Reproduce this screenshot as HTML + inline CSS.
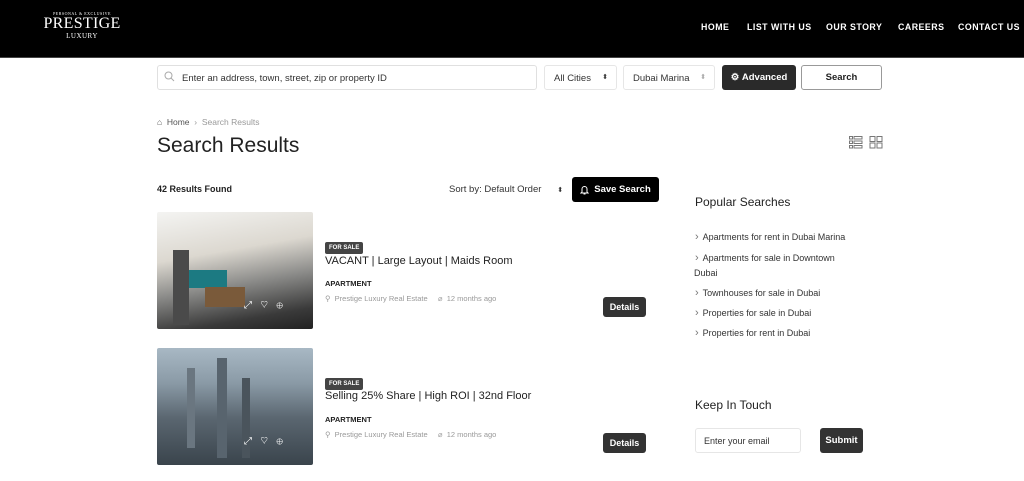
<!DOCTYPE html>
<html><head><meta charset="utf-8"><style>
*{margin:0;padding:0;box-sizing:border-box}
body{width:1024px;height:481px;overflow:hidden;background:#fff;font-family:"Liberation Sans",sans-serif;color:#222;position:relative}
.a{position:absolute;white-space:nowrap}
.hdr{left:0;top:0;width:1024px;height:58px;background:#000;border-bottom:1px solid #444}
.nav{top:22px;color:#fff;font-size:8.8px;font-weight:bold;letter-spacing:.5px}
.box{border:1px solid #e6e6e6;border-radius:3px;background:#fff;font-size:9.5px;color:#333}
.btn{border-radius:3px;font-size:9.5px;font-weight:bold;display:flex;align-items:center;justify-content:center}
.img{border-radius:2px;overflow:hidden}
.tag{background:#444;color:#fff;font-size:6px;font-weight:bold;padding:3px 4px;border-radius:2px}
.det{background:#333;color:#fff;font-size:9px;font-weight:bold;width:43px;height:20px;border-radius:3px;display:flex;align-items:center;justify-content:center}
.ps{font-size:9px;color:#333}
.ps:before{content:"›";color:#777;margin-right:4px;font-size:11px}
</style></head><body>
<div class="a hdr"></div>
<div class="a" style="left:40px;top:11px;width:84px;text-align:center;color:#fff;font-family:'Liberation Serif',serif">
<div style="font-size:4px;letter-spacing:.5px">PERSONAL &amp; EXCLUSIVE</div>
<div style="font-size:16px;line-height:16px;letter-spacing:.3px">PRESTIGE</div>
<div style="font-size:7px;letter-spacing:.5px">LUXURY</div></div>
<div class="a nav" style="left:701px">HOME</div>
<div class="a nav" style="left:747px">LIST WITH US</div>
<div class="a nav" style="left:826px">OUR STORY</div>
<div class="a nav" style="left:898px">CAREERS</div>
<div class="a nav" style="left:958px">CONTACT US</div>

<div class="a box" style="left:157px;top:65px;width:380px;height:25px;padding:7px 0 0 24px;border-color:#e0e0e0">Enter an address, town, street, zip or property ID</div>
<svg class="a" style="left:164px;top:71px" width="11" height="11" viewBox="0 0 11 11"><circle cx="4.5" cy="4.5" r="3.5" fill="none" stroke="#aaa"/><path d="M7 7l3 3" stroke="#aaa"/></svg>
<div class="a box" style="left:544px;top:65px;width:73px;height:25px;padding:7px 0 0 9px">All Cities<span style="position:absolute;right:8px;font-size:7px">⬍</span></div>
<div class="a box" style="left:623px;top:65px;width:92px;height:25px;padding:7px 0 0 9px">Dubai Marina<span style="position:absolute;right:8px;font-size:7px;color:#aaa">⬍</span></div>
<div class="a btn" style="left:722px;top:65px;width:74px;height:25px;background:#2a2a2a;color:#fff">⚙&nbsp;Advanced</div>
<div class="a btn" style="left:801px;top:65px;width:81px;height:25px;border:1px solid #999;color:#222">Search</div>

<div class="a" style="left:157px;top:117px;font-size:8.5px;color:#555">⌂&nbsp; Home &nbsp;<span style="color:#999">›&nbsp; Search Results</span></div>
<div class="a" style="left:157px;top:134px;font-size:21px;color:#222">Search Results</div>
<svg class="a" style="left:849px;top:136px" width="34" height="13" viewBox="0 0 34 13"><g fill="none" stroke="#777"><rect x="0.5" y="0.5" width="3" height="2.5"/><rect x="5" y="0.5" width="8" height="2.5"/><rect x="0.5" y="5" width="3" height="2.5"/><rect x="5" y="5" width="8" height="2.5"/><rect x="0.5" y="9.5" width="3" height="2.5"/><rect x="5" y="9.5" width="8" height="2.5"/><rect x="21" y="0.5" width="5" height="5"/><rect x="28" y="0.5" width="5" height="5"/><rect x="21" y="7" width="5" height="5"/><rect x="28" y="7" width="5" height="5"/></g></svg>

<div class="a" style="left:157px;top:184px;font-size:9px;font-weight:bold">42 Results Found</div>
<div class="a" style="left:449px;top:184px;font-size:9.5px;color:#333">Sort by: Default Order &nbsp;&nbsp;&nbsp;&nbsp;&nbsp;<span style="font-size:7px">⬍</span></div>
<div class="a btn" style="left:572px;top:177px;width:87px;height:25px;background:#000;color:#fff"><svg width="9" height="10" viewBox="0 0 9 10" style="margin-right:5px"><path d="M2 7V4a2.5 2.5 0 015 0v3l1 1H1zM3.5 9h2" fill="none" stroke="#fff"/></svg>Save Search</div>

<div class="a img" style="left:157px;top:212px;width:156px;height:117px;background:linear-gradient(170deg,#f4f4f2 0%,#dcd8d0 35%,#8a8a88 60%,#3a3a3a 85%,#222 100%)">
<div class="a" style="left:20px;top:58px;width:50px;height:18px;background:#1c7a82"></div>
<div class="a" style="left:16px;top:38px;width:16px;height:75px;background:#4a4a4a"></div>
<div class="a" style="left:48px;top:75px;width:40px;height:20px;background:#7a5a3a"></div></div>
<div class="a" style="left:325px;top:236px"><span class="tag">FOR SALE</span></div>
<div class="a" style="left:325px;top:255px;font-size:11px;color:#222">VACANT | Large Layout | Maids Room</div>
<div class="a" style="left:325px;top:279px;font-size:7.5px;font-weight:bold">APARTMENT</div>
<div class="a" style="left:325px;top:294px;font-size:7.5px;color:#999">⚲ &nbsp;Prestige Luxury Real Estate &nbsp;&nbsp;&nbsp;&nbsp;⌀ &nbsp;12 months ago</div>
<div class="a det" style="left:603px;top:297px">Details</div>
<div class="a" style="left:244px;top:300px;color:#fff;font-size:10px">⤢ &nbsp;&nbsp;♡ &nbsp;&nbsp;⊕</div>

<div class="a img" style="left:157px;top:348px;width:156px;height:117px;background:linear-gradient(180deg,#a8b8c4 0%,#8a9aa6 30%,#5a6670 60%,#3a444c 100%)">
<div class="a" style="left:30px;top:20px;width:8px;height:80px;background:#6a7680"></div>
<div class="a" style="left:60px;top:10px;width:10px;height:100px;background:#58646e"></div>
<div class="a" style="left:85px;top:30px;width:8px;height:80px;background:#4a545c"></div></div>
<div class="a" style="left:325px;top:372px"><span class="tag">FOR SALE</span></div>
<div class="a" style="left:325px;top:390px;font-size:11px;color:#222">Selling 25% Share | High ROI | 32nd Floor</div>
<div class="a" style="left:325px;top:415px;font-size:7.5px;font-weight:bold">APARTMENT</div>
<div class="a" style="left:325px;top:430px;font-size:7.5px;color:#999">⚲ &nbsp;Prestige Luxury Real Estate &nbsp;&nbsp;&nbsp;&nbsp;⌀ &nbsp;12 months ago</div>
<div class="a det" style="left:603px;top:433px">Details</div>
<div class="a" style="left:244px;top:436px;color:#fff;font-size:10px">⤢ &nbsp;&nbsp;♡ &nbsp;&nbsp;⊕</div>

<div class="a" style="left:695px;top:195px;font-size:12px;color:#222">Popular Searches</div>
<div class="a ps" style="left:695px;top:231px">Apartments for rent in Dubai Marina</div>
<div class="a ps" style="left:695px;top:251px;line-height:15px">Apartments for sale in Downtown<br><span style="margin-left:-1px">Dubai</span></div>
<div class="a ps" style="left:695px;top:287px">Townhouses for sale in Dubai</div>
<div class="a ps" style="left:695px;top:307px">Properties for sale in Dubai</div>
<div class="a ps" style="left:695px;top:327px">Properties for rent in Dubai</div>
<div class="a" style="left:695px;top:398px;font-size:12px;color:#222">Keep In Touch</div>
<div class="a box" style="left:695px;top:428px;width:106px;height:25px;padding:7px 0 0 8px;font-size:9px">Enter your email</div>
<div class="a btn" style="left:820px;top:428px;width:43px;height:25px;background:#333;color:#fff">Submit</div>
</body></html>
